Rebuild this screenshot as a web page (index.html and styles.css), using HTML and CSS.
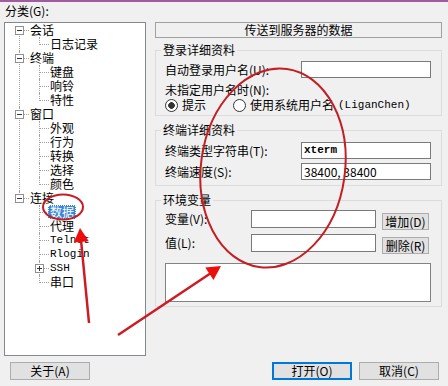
FILE: index.html
```html
<!DOCTYPE html>
<html lang="zh-CN">
<head>
    <meta charset="UTF-8">
    <title>PuTTY 配置 - 数据</title>
    <link rel="stylesheet" href="styles.css">
</head>
<body>
    <div class="dialog">
        <div class="left">
            <div class="cat-label">分类(G):</div>
            <div class="tree-box">
                <ul class="tree">
                    <li><div class="row"><span class="toggle"></span>会话</div>
                        <ul>
                            <li><div class="row">日志记录</div></li>
                        </ul>
                    </li>
                    <li><div class="row"><span class="toggle"></span>终端</div>
                        <ul>
                            <li><div class="row">键盘</div></li>
                            <li><div class="row">响铃</div></li>
                            <li><div class="row">特性</div></li>
                        </ul>
                    </li>
                    <li><div class="row"><span class="toggle"></span>窗口</div>
                        <ul>
                            <li><div class="row">外观</div></li>
                            <li><div class="row">行为</div></li>
                            <li><div class="row">转换</div></li>
                            <li><div class="row">选择</div></li>
                            <li><div class="row">颜色</div></li>
                        </ul>
                    </li>
                    <li><div class="row"><span class="toggle"></span>连接</div>
                        <ul>
                            <li><div class="row"><span class="sel">数据</span></div></li>
                            <li><div class="row">代理</div></li>
                            <li><div class="row mono">Telnet</div></li>
                            <li><div class="row mono">Rlogin</div></li>
                            <li><div class="row mono"><span class="toggle plus"></span>SSH</div></li>
                            <li><div class="row">串口</div></li>
                        </ul>
                    </li>
                </ul>
            </div>
            <button class="btn about">关于(A)</button>
        </div>

        <div class="right">
            <div class="panel-title">传送到服务器的数据</div>

            <fieldset class="group login">
                <legend>登录详细资料</legend>
                <div class="field">
                    <span>自动登录用户名(U):</span>
                    <div class="edit"></div>
                </div>
                <div class="note">未指定用户名时(N):</div>
                <div class="radios">
                    <span class="radio first"><span class="dot checked"></span>提示</span>
                    <span class="radio"><span class="dot"></span>使用系统用户名 <span class="mono">(LiganChen)</span></span>
                </div>
            </fieldset>

            <fieldset class="group term">
                <legend>终端详细资料</legend>
                <div class="field">
                    <span>终端类型字符串(T):</span>
                    <div class="edit mono bold">xterm</div>
                </div>
                <div class="field">
                    <span>终端速度(S):</span>
                    <div class="edit">38400, 38400</div>
                </div>
            </fieldset>

            <fieldset class="group env">
                <legend>环境变量</legend>
                <div class="env-row">
                    <span class="env-label">变量(V):</span>
                    <div class="edit"></div>
                    <button class="btn small">增加(D)</button>
                </div>
                <div class="env-row">
                    <span class="env-label">值(L):</span>
                    <div class="edit"></div>
                    <button class="btn small">删除(R)</button>
                </div>
                <div class="listbox"></div>
            </fieldset>

            <div class="buttons">
                <button class="btn default">打开(O)</button>
                <button class="btn">取消(C)</button>
            </div>
        </div>
    </div>

    <!-- red annotations drawn over the screenshot -->
    <svg class="marks" width="448" height="386" viewBox="0 0 448 386">
        <ellipse cx="63" cy="207" rx="20" ry="12.5" fill="none" stroke="#c41e24" stroke-width="2"/>
        <ellipse cx="273" cy="168" rx="72" ry="100" transform="rotate(8 273 168)" fill="none" stroke="#c41e24" stroke-width="2"/>
        <line x1="89" y1="323" x2="81" y2="240" stroke="#cc1c22" stroke-width="2.5"/>
        <polygon points="80,228 73.8,242.6 88.8,241.2" fill="#ee0d0d"/>
        <line x1="118" y1="335" x2="211" y2="273" stroke="#cc1c22" stroke-width="2.5"/>
        <polygon points="221,266 205.3,267.5 213.5,279.9" fill="#ee0d0d"/>
    </svg>
</body>
</html>
```

FILE: styles.css
```css
* {
    margin: 0;
    padding: 0;
    box-sizing: border-box;
}

body {
    width: 448px;
    height: 386px;
    overflow: hidden;
    background: #f0f0f0;
    border-top: 2px solid #a05ba3;
    font-family: "Noto Sans CJK SC", sans-serif;
    font-size: 12px;
    line-height: 14px;
    color: #000;
}

.mono {
    font-family: "Liberation Mono", "Noto Sans CJK SC", monospace;
    font-size: 11px;
}

.bold {
    font-weight: bold;
}

.dialog {
    display: flex;
    height: 384px;
    padding: 2px 0 6px 4px;
}

/* left: category tree */
.left {
    width: 142px;
    display: flex;
    flex-direction: column;
}

.cat-label {
    margin: 0 0 4px 1px;
    height: 14px;
}

.tree-box {
    height: 334px;
    background: #fff;
    border: 1px solid #828790;
}

.tree,
.tree ul {
    list-style: none;
}

.tree ul {
    padding-left: 20px;
}

.tree li {
    position: relative;
}

.tree li::before {
    content: "";
    position: absolute;
    left: 14px;
    top: 7px;
    width: 10px;
    border-top: 1px dotted #a0a0a0;
}

.tree li::after {
    content: "";
    position: absolute;
    left: 14px;
    top: 0;
    bottom: 0;
    border-left: 1px dotted #a0a0a0;
}

.tree > li:first-child::after {
    top: 7px;
}

.tree li:last-child::after {
    bottom: auto;
    height: 8px;
}

.row {
    height: 14px;
    line-height: 14px;
    padding-left: 25px;
    white-space: nowrap;
}

.toggle {
    position: absolute;
    z-index: 1;
    left: 10px;
    top: 3px;
    width: 9px;
    height: 9px;
    border: 1px solid #919191;
    background: linear-gradient(#333, #333) center / 5px 1px no-repeat, #fff;
}

.toggle.plus {
    background: linear-gradient(#333, #333) center / 5px 1px no-repeat,
                linear-gradient(#333, #333) center / 1px 5px no-repeat, #fff;
}

.sel {
    display: inline-block;
    margin-left: -2px;
    padding: 0 2px;
    height: 14px;
    background: #3a87d8;
    color: #fff;
    outline: 1px dotted #fff;
    outline-offset: -1px;
}

/* buttons */
.btn {
    height: 18px;
    width: 80px;
    border: 1px solid #adadad;
    background: #e1e1e1;
    font: inherit;
    line-height: 16px;
    color: #000;
    text-align: center;
}

.btn.about {
    margin: 6px 0 0 6px;
}

.btn.default {
    border-color: #0078d7;
    box-shadow: inset 0 0 0 1px #0078d7;
}

.btn.small {
    width: 47px;
    height: 17px;
    line-height: 15px;
    margin: 3px 0 0 6px;
}

/* right: settings panel */
.right {
    width: 287px;
    margin-left: 9px;
    display: flex;
    flex-direction: column;
}

.panel-title {
    margin-top: 18px;
    height: 16px;
    border: 1px solid #a0a0a0;
    text-align: center;
    line-height: 14px;
}

.group {
    border: 1px solid #dcdcdc;
    padding: 0 10px 3px 9px;
    margin-top: 7px;
    min-width: 0;
}

.group legend {
    margin-left: -4px;
    padding: 0 2px;
    line-height: 14px;
}

.group.login {
    margin-top: 5px;
}

.group.term {
    padding-bottom: 5px;
}

.group.env {
    padding-bottom: 4px;
}

.field {
    display: grid;
    grid-template-columns: 136px 130px;
    align-items: center;
    margin-top: 4px;
}

.term .field:first-of-type {
    margin-top: 5px;
}

.edit {
    height: 17px;
    background: #fff;
    border: 1px solid #7a7a7a;
    padding: 0 2px;
    line-height: 15px;
    white-space: nowrap;
    overflow: hidden;
}

.note {
    margin-top: 5px;
}

.radios {
    display: flex;
    align-items: center;
    height: 14px;
    margin-top: 1px;
}

.radio {
    display: flex;
    align-items: center;
    gap: 4px;
}

.radio.first {
    width: 68px;
}

.dot {
    width: 13px;
    height: 13px;
    border: 1px solid #333;
    border-radius: 50%;
    background: #fff;
}

.dot.checked {
    background: radial-gradient(circle, #333 0 3px, #fff 3.6px);
}

.env-row {
    display: flex;
    align-items: flex-start;
    margin-top: 4px;
}

.env-row:first-of-type {
    margin-top: 3px;
}

.env-label {
    width: 86px;
    line-height: 18px;
}

.env-row .edit {
    width: 125px;
    height: 18px;
}

.listbox {
    margin-top: 9px;
    height: 39px;
    background: #fff;
    border: 1px solid #828282;
}

.buttons {
    margin-top: auto;
    display: flex;
    justify-content: flex-end;
    gap: 7px;
    padding-right: 3px;
}

.marks {
    position: fixed;
    top: 0;
    left: 0;
    pointer-events: none;
}
```
